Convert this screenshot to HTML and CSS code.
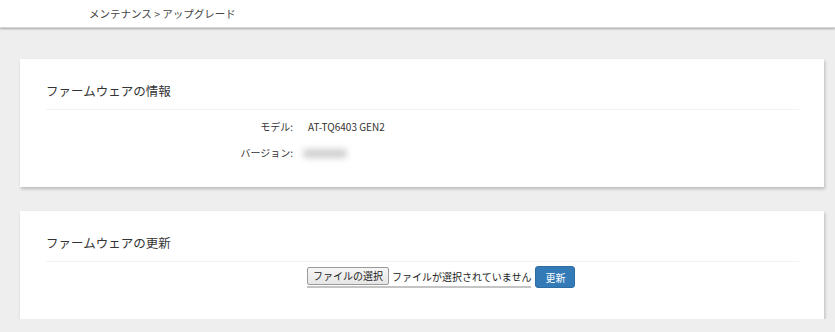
FILE: index.html
```html
<!DOCTYPE html>
<html lang="ja">
<head>
  <meta charset="UTF-8" />
  <meta name="viewport" content="width=device-width, initial-scale=1.0"/>
  <title>アップグレード</title>
  <link rel="stylesheet" href="styles.css">
</head>
<body>
  <!-- Header / breadcrumb -->
  <div class="topbar">
    <div class="breadcrumb">メンテナンス &gt; アップグレード</div>
  </div>

  <div class="content">
    <!-- Firmware info -->
    <div class="panel">
      <h2 class="panel-title">ファームウェアの情報</h2>
      <div class="panel-body info">
        <div class="info-row">
          <span class="info-label">モデル:</span>
          <span class="info-value">AT-TQ6403 GEN2</span>
        </div>
        <div class="info-row">
          <span class="info-label">バージョン:</span>
          <span class="info-value"><span class="masked"></span></span>
        </div>
      </div>
    </div>

    <!-- Firmware update -->
    <div class="panel">
      <h2 class="panel-title">ファームウェアの更新</h2>
      <form class="panel-body upload">
        <span></span>
        <div class="upload-controls">
          <label class="file-picker">
            <input type="file" class="file-input">
            <span class="file-btn">ファイルの選択</span>
            <span class="file-name">ファイルが選択されていません</span>
          </label>
          <button type="button" class="btn-primary">更新</button>
        </div>
      </form>
    </div>
  </div>
</body>
</html>
```

FILE: styles.css
```css
/* General reset */
* {
  margin: 0;
  padding: 0;
  box-sizing: border-box;
}

body {
  font-family: "Noto Sans CJK JP", "Noto Sans", sans-serif;
  background-color: #eeeeee;
  color: #333;
  font-size: 10px;
}

/* Top bar */
.topbar {
  background: #fff;
  height: 28px;
  display: flex;
  align-items: center;
  padding-left: 89px;
  box-shadow: 0 1px 2px rgba(0,0,0,0.3);
  border-bottom: 1px solid #d6d6d6;
}
.breadcrumb {
  font-size: 10.5px;
  color: #444;
}

/* Panels */
.content {
  padding: 31px 11px 0 20px;
  display: flex;
  flex-direction: column;
  gap: 24px;
}
.panel {
  background: #fff;
  padding: 22px 25px 21px 26px;
  box-shadow: 1px 2px 3px rgba(0,0,0,0.22);
}
.panel-title {
  font-size: 12.5px;
  font-weight: normal;
  line-height: 20px;
  color: #333;
  padding-bottom: 8px;
  border-bottom: 1px solid #f2f2f2;
}
.panel-body {
  display: grid;
  grid-template-columns: 247px 1fr;
  column-gap: 15px;
  padding-top: 4px;
}

/* Info rows */
.info-row {
  display: contents;
}
.info-label,
.info-value {
  line-height: 26px;
  height: 26px;
}
.info-label {
  text-align: right;
}
.info-value {
  display: flex;
  align-items: center;
}
.masked {
  display: inline-block;
  width: 44px;
  height: 9px;
  margin-left: -5px;
  background: #cfcfcf;
  border-radius: 4px;
  filter: blur(3px);
}

/* Upload form */
.upload {
  padding-bottom: 10px;
}
.upload-controls {
  display: flex;
  align-items: center;
  gap: 4px;
  margin-left: -1px;
}
.file-picker {
  display: flex;
  align-items: center;
  gap: 3px;
  height: 22px;
  border-bottom: 2px solid #c4c4c4;
  cursor: pointer;
}
.file-input {
  display: none;
}
.file-btn {
  display: inline-block;
  height: 18px;
  line-height: 16px;
  padding: 0 5px;
  font-size: 10px;
  color: #222;
  background: linear-gradient(#f6f6f6, #e6e6e6);
  border: 1px solid #9a9a9a;
  border-radius: 2px;
}
.file-name {
  font-size: 10px;
  color: #222;
}
.btn-primary {
  font-family: inherit;
  font-size: 10px;
  color: #fff;
  background-color: #337ab7;
  border: 1px solid #2e6da4;
  border-radius: 3px;
  width: 40px;
  height: 22px;
}
```
